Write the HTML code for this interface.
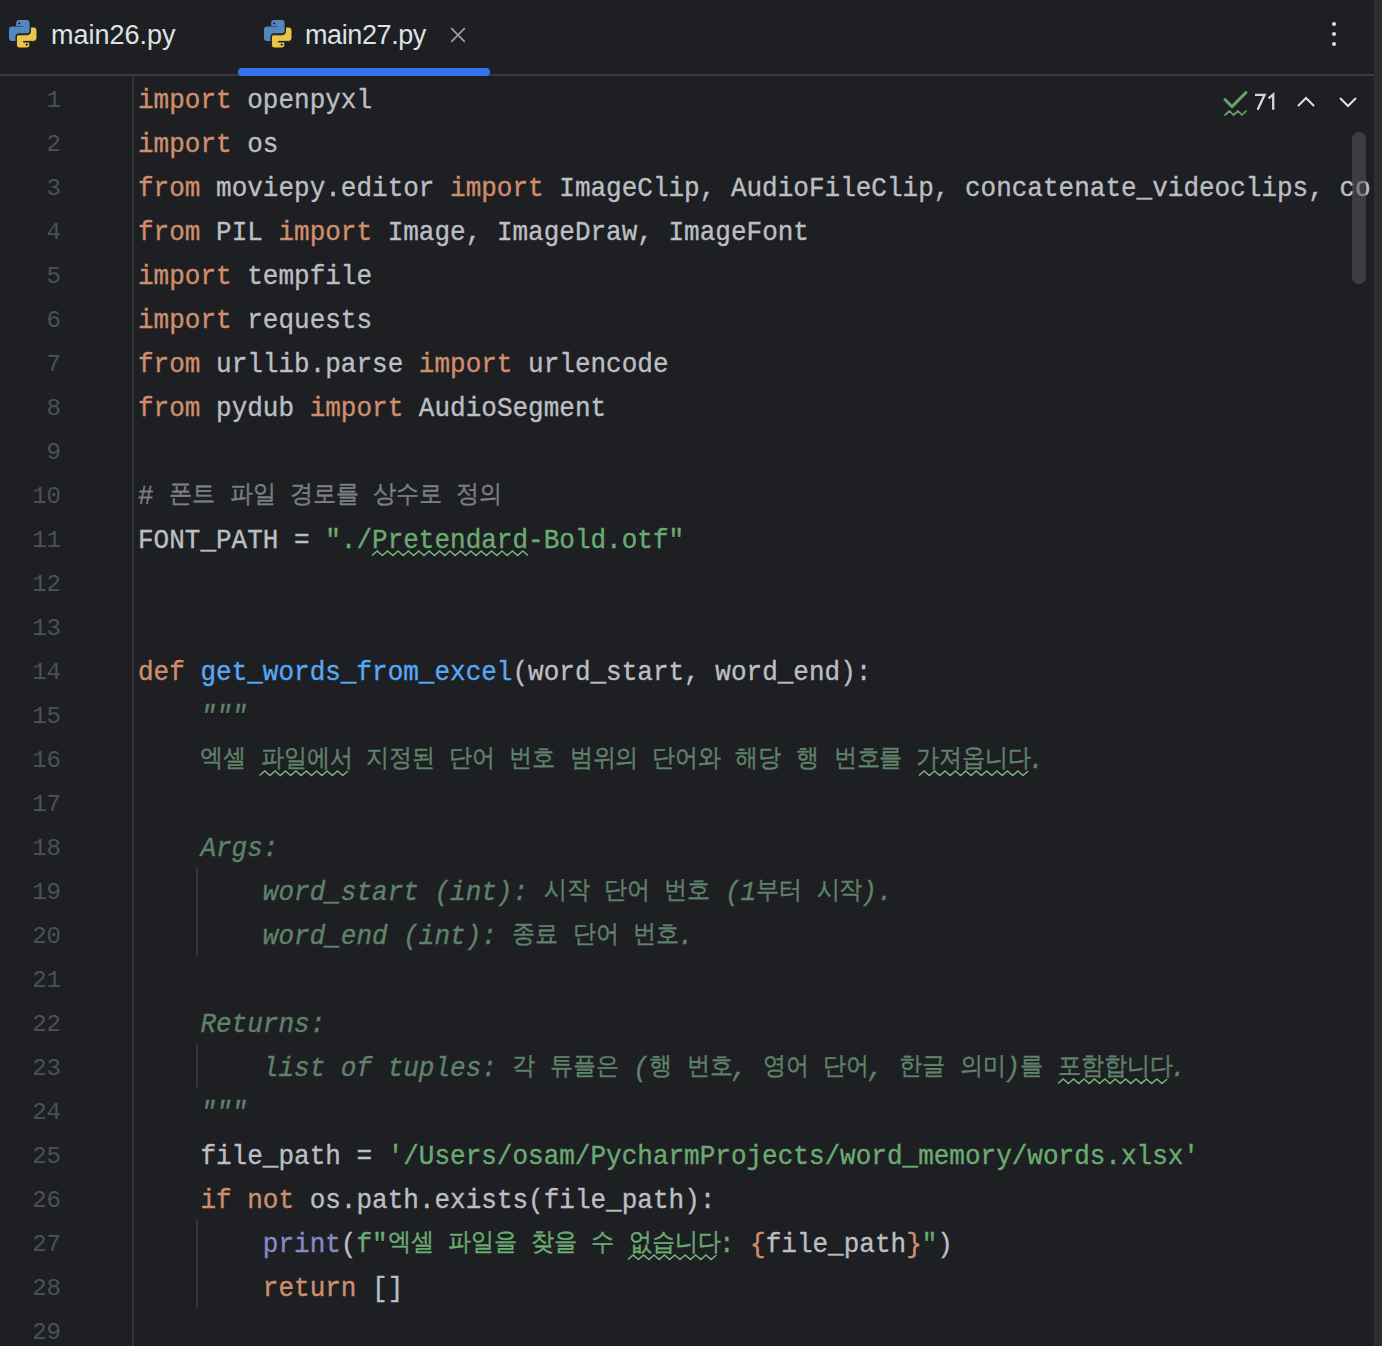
<!DOCTYPE html><html><head><meta charset="utf-8"><style>
*{margin:0;padding:0;box-sizing:border-box}
html,body{width:1382px;height:1346px;overflow:hidden;background:#1e1f22}
body{position:relative;font-family:"Liberation Mono",monospace}
.tabs{position:absolute;left:0;top:0;width:1374px;height:76px}
.sep{position:absolute;left:0;top:74px;width:1374px;height:2px;background:#393b40}
.tab{position:absolute;top:0;height:74px;font-family:"Liberation Sans",sans-serif;font-size:27px;color:#dfe1e5}
.tab svg{position:absolute;top:20px;left:0}
.tab .t{position:absolute;top:20px;white-space:nowrap;line-height:normal}
.ul{position:absolute;left:238px;top:68px;width:252px;height:8px;background:#3574f0;border-radius:4px}
.gut{position:absolute;left:132px;top:76px;width:2px;height:1270px;background:#313337}
.ln{position:absolute;left:0;width:61px;text-align:right;font-size:24px;line-height:44px;color:#4b5059}
.l{position:absolute;left:138px;white-space:pre;font-size:26px;line-height:44px;letter-spacing:0px;color:#bcbec4;-webkit-text-stroke:0.35px currentColor;transform-origin:0 29px;transform:scaleY(1.08)}
.code{position:absolute;left:0;top:0;width:1371px;height:1346px;overflow:hidden}
.k{color:#cf8e6d}.d{color:#bcbec4}.s{color:#6aab73}.f{color:#56a8f5}.c{color:#7a7e85}.ds{color:#5f826b;font-style:italic}.p{color:#8888c6}.b{color:#cf8e6d}
i.h{display:inline-block;font-style:normal;white-space:nowrap;vertical-align:baseline;font-size:23.5px;letter-spacing:-1.1px;line-height:0;position:relative;top:-2px}
.ov{position:absolute;left:0;top:0}
.ig{position:absolute;left:196px;width:2px;background:#34363a;border-radius:1px}
.rs{position:absolute;left:1374px;top:0;width:8px;height:1346px;background:#2b2d30}
.thumb{position:absolute;left:1352px;top:132px;width:14px;height:152px;border-radius:7px;background:rgba(84,86,90,0.56)}
</style></head><body>
<div class="code"><div class="l" style="top:79px"><span class="k">import</span><span class="d"> openpyxl</span></div><div class="l" style="top:123px"><span class="k">import</span><span class="d"> os</span></div><div class="l" style="top:167px"><span class="k">from</span><span class="d"> moviepy.editor </span><span class="k">import</span><span class="d"> ImageClip, AudioFileClip, concatenate_videoclips, concatenate_audioclips</span></div><div class="l" style="top:211px"><span class="k">from</span><span class="d"> PIL </span><span class="k">import</span><span class="d"> Image, ImageDraw, ImageFont</span></div><div class="l" style="top:255px"><span class="k">import</span><span class="d"> tempfile</span></div><div class="l" style="top:299px"><span class="k">import</span><span class="d"> requests</span></div><div class="l" style="top:343px"><span class="k">from</span><span class="d"> urllib.parse </span><span class="k">import</span><span class="d"> urlencode</span></div><div class="l" style="top:387px"><span class="k">from</span><span class="d"> pydub </span><span class="k">import</span><span class="d"> AudioSegment</span></div><div class="l" style="top:475px"><span class="c"># <i class="h" style="width:44.8px">폰트</i> <i class="h" style="width:44.8px">파일</i> <i class="h" style="width:67.2px">경로를</i> <i class="h" style="width:67.2px">상수로</i> <i class="h" style="width:44.8px">정의</i></span></div><div class="l" style="top:519px"><span class="d">FONT_PATH = </span><span class="s">&quot;./Pretendard-Bold.otf&quot;</span></div><div class="l" style="top:651px"><span class="k">def</span><span class="d"> </span><span class="f">get_words_from_excel</span><span class="d">(word_start, word_end):</span></div><div class="l" style="top:695px"><span class="ds">    &quot;&quot;&quot;</span></div><div class="l" style="top:739px"><span class="ds">    <i class="h" style="width:44.8px">엑셀</i> <i class="h" style="width:89.6px">파일에서</i> <i class="h" style="width:67.2px">지정된</i> <i class="h" style="width:44.8px">단어</i> <i class="h" style="width:44.8px">번호</i> <i class="h" style="width:67.2px">범위의</i> <i class="h" style="width:67.2px">단어와</i> <i class="h" style="width:44.8px">해당</i> <i class="h" style="width:22.4px">행</i> <i class="h" style="width:67.2px">번호를</i> <i class="h" style="width:112.0px">가져옵니다</i>.</span></div><div class="l" style="top:827px"><span class="ds">    Args:</span></div><div class="l" style="top:871px"><span class="ds">        word_start (int): <i class="h" style="width:44.8px">시작</i> <i class="h" style="width:44.8px">단어</i> <i class="h" style="width:44.8px">번호</i> (1<i class="h" style="width:44.8px">부터</i> <i class="h" style="width:44.8px">시작</i>).</span></div><div class="l" style="top:915px"><span class="ds">        word_end (int): <i class="h" style="width:44.8px">종료</i> <i class="h" style="width:44.8px">단어</i> <i class="h" style="width:44.8px">번호</i>.</span></div><div class="l" style="top:1003px"><span class="ds">    Returns:</span></div><div class="l" style="top:1047px"><span class="ds">        list of tuples: <i class="h" style="width:22.4px">각</i> <i class="h" style="width:67.2px">튜플은</i> (<i class="h" style="width:22.4px">행</i> <i class="h" style="width:44.8px">번호</i>, <i class="h" style="width:44.8px">영어</i> <i class="h" style="width:44.8px">단어</i>, <i class="h" style="width:44.8px">한글</i> <i class="h" style="width:44.8px">의미</i>)<i class="h" style="width:22.4px">를</i> <i class="h" style="width:112.0px">포함합니다</i>.</span></div><div class="l" style="top:1091px"><span class="ds">    &quot;&quot;&quot;</span></div><div class="l" style="top:1135px"><span class="d">    file_path = </span><span class="s">&#x27;/Users/osam/PycharmProjects/word_memory/words.xlsx&#x27;</span></div><div class="l" style="top:1179px"><span class="d">    </span><span class="k">if</span><span class="d"> </span><span class="k">not</span><span class="d"> os.path.exists(file_path):</span></div><div class="l" style="top:1223px"><span class="d">        </span><span class="p">print</span><span class="d">(</span><span class="s">f&quot;<i class="h" style="width:44.8px">엑셀</i> <i class="h" style="width:67.2px">파일을</i> <i class="h" style="width:44.8px">찾을</i> <i class="h" style="width:22.4px">수</i> <i class="h" style="width:89.6px">없습니다</i>: </span><span class="b">{</span><span class="d">file_path</span><span class="b">}</span><span class="s">&quot;</span><span class="d">)</span></div><div class="l" style="top:1267px"><span class="d">        </span><span class="k">return</span><span class="d"> []</span></div></div>
<div class="ln" style="top:79px">1</div><div class="ln" style="top:123px">2</div><div class="ln" style="top:167px">3</div><div class="ln" style="top:211px">4</div><div class="ln" style="top:255px">5</div><div class="ln" style="top:299px">6</div><div class="ln" style="top:343px">7</div><div class="ln" style="top:387px">8</div><div class="ln" style="top:431px">9</div><div class="ln" style="top:475px">10</div><div class="ln" style="top:519px">11</div><div class="ln" style="top:563px">12</div><div class="ln" style="top:607px">13</div><div class="ln" style="top:651px">14</div><div class="ln" style="top:695px">15</div><div class="ln" style="top:739px">16</div><div class="ln" style="top:783px">17</div><div class="ln" style="top:827px">18</div><div class="ln" style="top:871px">19</div><div class="ln" style="top:915px">20</div><div class="ln" style="top:959px">21</div><div class="ln" style="top:1003px">22</div><div class="ln" style="top:1047px">23</div><div class="ln" style="top:1091px">24</div><div class="ln" style="top:1135px">25</div><div class="ln" style="top:1179px">26</div><div class="ln" style="top:1223px">27</div><div class="ln" style="top:1267px">28</div><div class="ln" style="top:1311px">29</div>
<div class="gut"></div>
<svg class="ov" width="1382" height="1346"><polyline points="372.0,555.5 377.2,551.0 382.4,555.5 387.6,551.0 392.8,555.5 398.0,551.0 403.2,555.5 408.4,551.0 413.6,555.5 418.8,551.0 424.0,555.5 429.2,551.0 434.4,555.5 439.6,551.0 444.8,555.5 450.0,551.0 455.2,555.5 460.4,551.0 465.6,555.5 470.8,551.0 476.0,555.5 481.2,551.0 486.4,555.5 491.6,551.0 496.8,555.5 502.0,551.0 507.2,555.5 512.4,551.0 517.6,555.5 522.8,551.0 528.0,555.5" fill="none" stroke="#79b27c" stroke-width="1.6"/><polyline points="259.5,775.5 264.7,771.0 269.9,775.5 275.1,771.0 280.3,775.5 285.5,771.0 290.7,775.5 295.9,771.0 301.1,775.5 306.3,771.0 311.5,775.5 316.7,771.0 321.9,775.5 327.1,771.0 332.3,775.5 337.5,771.0 342.7,775.5 347.9,771.0" fill="none" stroke="#79b27c" stroke-width="1.6"/><polyline points="919.0,775.5 924.2,771.0 929.4,775.5 934.6,771.0 939.8,775.5 945.0,771.0 950.2,775.5 955.4,771.0 960.6,775.5 965.8,771.0 971.0,775.5 976.2,771.0 981.4,775.5 986.6,771.0 991.8,775.5 997.0,771.0 1002.2,775.5 1007.4,771.0 1012.6,775.5 1017.8,771.0 1023.0,775.5 1028.2,771.0" fill="none" stroke="#79b27c" stroke-width="1.6"/><polyline points="1058.0,1083.5 1063.2,1079.0 1068.4,1083.5 1073.6,1079.0 1078.8,1083.5 1084.0,1079.0 1089.2,1083.5 1094.4,1079.0 1099.6,1083.5 1104.8,1079.0 1110.0,1083.5 1115.2,1079.0 1120.4,1083.5 1125.6,1079.0 1130.8,1083.5 1136.0,1079.0 1141.2,1083.5 1146.4,1079.0 1151.6,1083.5 1156.8,1079.0 1162.0,1083.5 1167.2,1079.0" fill="none" stroke="#79b27c" stroke-width="1.6"/><polyline points="628.0,1259.5 633.2,1255.0 638.4,1259.5 643.6,1255.0 648.8,1259.5 654.0,1255.0 659.2,1259.5 664.4,1255.0 669.6,1259.5 674.8,1255.0 680.0,1259.5 685.2,1255.0 690.4,1259.5 695.6,1255.0 700.8,1259.5 706.0,1255.0 711.2,1259.5 716.4,1255.0" fill="none" stroke="#79b27c" stroke-width="1.6"/></svg>
<div class="thumb"></div>
<div class="sep"></div>
<div class="ul"></div>
<div class="tab" style="left:9px"><svg width="28" height="28" viewBox="0 0 28 28"><path d="M10,0 H17.6 Q20.6,0 20.6,3 V11.2 Q20.6,13.2 18.6,13.2 H10 Q6.5,13.2 6.5,16.7 V21 H3 Q0,21 0,17.5 V10 Q0,6.6 3.4,6.6 H13.6 V6 H7.2 V2.8 Q7.2,0 10,0 Z" fill="#5486c0"/><path d="M18,28 H10.4 Q7.4,28 7.4,25 V16.8 Q7.4,14.8 9.4,14.8 H18 Q21.5,14.8 21.5,11.3 V7 H25 Q28,7 28,10.5 V18 Q28,21.4 24.6,21.4 H14.4 V22 H20.8 V25.2 Q20.8,28 18,28 Z" fill="#e9c649" stroke="#1e1f22" stroke-width="1"/><circle cx="10.2" cy="3.3" r="1.1" fill="#17234a"/><circle cx="17.8" cy="24.7" r="1.1" fill="#2a2000"/></svg><div class="t" style="left:42px">main26.py</div></div>
<div class="tab" style="left:264px"><svg width="28" height="28" viewBox="0 0 28 28"><path d="M10,0 H17.6 Q20.6,0 20.6,3 V11.2 Q20.6,13.2 18.6,13.2 H10 Q6.5,13.2 6.5,16.7 V21 H3 Q0,21 0,17.5 V10 Q0,6.6 3.4,6.6 H13.6 V6 H7.2 V2.8 Q7.2,0 10,0 Z" fill="#5486c0"/><path d="M18,28 H10.4 Q7.4,28 7.4,25 V16.8 Q7.4,14.8 9.4,14.8 H18 Q21.5,14.8 21.5,11.3 V7 H25 Q28,7 28,10.5 V18 Q28,21.4 24.6,21.4 H14.4 V22 H20.8 V25.2 Q20.8,28 18,28 Z" fill="#e9c649" stroke="#1e1f22" stroke-width="1"/><circle cx="10.2" cy="3.3" r="1.1" fill="#17234a"/><circle cx="17.8" cy="24.7" r="1.1" fill="#2a2000"/></svg><div class="t" style="left:41px;letter-spacing:-0.4px">main27.py</div></div><svg class="ov" width="1382" height="130">
<path d="M451.2,28.2 L464.8,41.8 M464.8,28.2 L451.2,41.8" stroke="#9a9da2" stroke-width="1.7" fill="none"/>
<circle cx="1334" cy="24" r="2.1" fill="#d8d9dc"/><circle cx="1334" cy="34" r="2.1" fill="#d8d9dc"/><circle cx="1334" cy="44" r="2.1" fill="#d8d9dc"/>
<path d="M1225,99.5 L1232,106.6 L1246,92.5" stroke="#64a36e" stroke-width="3" fill="none" stroke-linecap="round" stroke-linejoin="round"/>
<path d="M1225,115 L1229.5,111 L1233.5,115 L1238,111 L1242,115 L1246,111" stroke="#64a36e" stroke-width="1.7" fill="none" stroke-linecap="round" stroke-linejoin="round"/>
<path d="M1255,94.8 H1264.6 L1257.6,109.8 M1268.6,98.4 L1273.2,94.4 V109.8" stroke="#d4d6da" stroke-width="2.3" fill="none"/>
<path d="M1298,106 L1306,98 L1314,106" stroke="#dfe1e5" stroke-width="2" fill="none"/>
<path d="M1340,98 L1348,106 L1356,98" stroke="#dfe1e5" stroke-width="2" fill="none"/>
</svg>

<div class="ig" style="top:867px;height:89px"></div>
<div class="ig" style="top:1044px;height:44px"></div>
<div class="ig" style="top:1219px;height:89px"></div>

<div class="rs"></div>
</body></html>
